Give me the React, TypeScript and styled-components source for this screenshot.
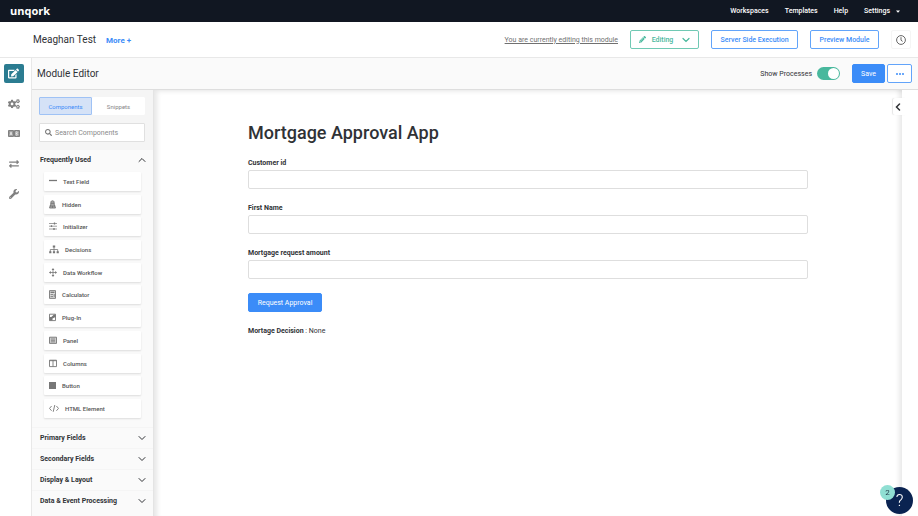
import React, { ReactNode, useState } from "react";
import styled, { createGlobalStyle } from "styled-components";
import { FaCogs, FaEdit, FaExchangeAlt, FaPencilAlt, FaSearch, FaWrench } from "react-icons/fa";

const color = {
  navy: "#111722",
  blue: "#3b8cf8",
  blueLine: "#62a4fa",
  teal: "#2b7c91",
  green: "#48b89d",
  greenLine: "#70c9b4",
  ink: "#303236",
  line: "#e8e8e8",
};

const GlobalStyle = createGlobalStyle`
  *, *::before, *::after { box-sizing: border-box; }
  body { margin: 0; background: #fff; }
  body, button, input { font-family: Roboto, "Liberation Sans", sans-serif; color: ${color.ink}; }
  button { cursor: pointer; margin: 0; }
  svg { display: block; flex: none; }
`;

const Page = styled.div`
  display: flex;
  flex-direction: column;
  height: 100vh;
  overflow: hidden;
`;

const TopBar = styled.nav`
  flex: none;
  display: flex;
  align-items: center;
  justify-content: space-between;
  height: 22px;
  padding: 0 18px 0 10px;
  background: ${color.navy};
`;

const Logo = styled.a`
  font: 700 11px/16px "Open Sans", sans-serif;
  color: #fff;
  text-decoration: none;
`;

const TopLinks = styled.div`
  display: flex;
  gap: 16px;
`;

const TopLink = styled.a`
  display: flex;
  align-items: center;
  gap: 6px;
  font-size: 7px;
  font-weight: 500;
  color: #fff;
  text-decoration: none;
`;

const Header = styled.header`
  flex: none;
  display: flex;
  align-items: center;
  height: 36px;
  padding: 0 7px 0 33px;
  border-bottom: 1px solid ${color.line};
`;

const ModuleName = styled.span`
  font-size: 10px;
`;

const More = styled.button`
  margin-left: 10px;
  padding: 2px 0 0;
  border: 0;
  background: none;
  font-size: 8px;
  font-weight: 700;
  color: ${color.blue};
`;

const EditNotice = styled.a`
  margin-left: auto;
  margin-right: 12px;
  font-size: 7px;
  color: #707070;
`;

const Button = styled.button<{ $tone?: string; $line?: string; $solid?: boolean; $width: number }>`
  display: flex;
  align-items: center;
  justify-content: center;
  width: ${(p) => p.$width}px;
  height: 19px;
  padding: 0;
  border: 1px solid ${(p) => p.$line ?? (p.$solid ? color.blue : color.blueLine)};
  border-radius: 2px;
  background: ${(p) => (p.$solid ? color.blue : "#fff")};
  font-size: 7px;
  font-weight: ${(p) => (p.$solid ? 400 : 500)};
  white-space: nowrap;
  color: ${(p) => (p.$solid ? "#fff" : p.$tone ?? color.blue)};
`;

const HeaderActions = styled.div`
  display: flex;
  gap: 12px;
`;

const EditingContent = styled.span`
  display: flex;
  align-items: center;
  gap: 6px;
  svg:last-child { margin-left: 3px; }
`;

const HistoryButton = styled.button`
  display: flex;
  align-items: center;
  justify-content: center;
  width: 20px;
  height: 19px;
  padding: 0;
  border: 1px solid #f5f5f5;
  border-radius: 2px;
  background: #fff;
`;

const Body = styled.div`
  flex: 1;
  display: flex;
  min-height: 0;
`;

const Rail = styled.nav`
  flex: none;
  display: flex;
  flex-direction: column;
  align-items: center;
  gap: 11px;
  width: 32px;
  padding: 6px 4px 0 0;
  border-right: 1px solid ${color.line};
`;

const RailButton = styled.button<{ $active?: boolean }>`
  display: flex;
  align-items: center;
  justify-content: center;
  width: 20px;
  height: 19px;
  padding: 0;
  border: 0;
  border-radius: 2px;
  background: ${(p) => (p.$active ? color.teal : "none")};
  color: ${(p) => (p.$active ? "#fff" : "#808080")};
`;

const Editor = styled.div`
  flex: 1;
  display: flex;
  flex-direction: column;
  min-width: 0;
`;

const Toolbar = styled.div`
  flex: none;
  display: flex;
  align-items: center;
  height: 32px;
  padding: 0 6px 0 5px;
  border-bottom: 1px solid #dedede;
  background: #fafafa;
`;

const ToolbarTitle = styled.h1`
  margin: 0 auto 0 0;
  font-size: 10px;
  font-weight: 400;
`;

const ToggleLabel = styled.label`
  display: flex;
  align-items: center;
  gap: 5px;
  margin-right: 12px;
  font-size: 7px;
`;

const Toggle = styled.input`
  appearance: none;
  display: flex;
  align-items: center;
  width: 23px;
  height: 13px;
  margin: 0;
  padding: 1px;
  border-radius: 7px;
  background: #bbb;
  cursor: pointer;
  &::before {
    content: "";
    width: 11px;
    height: 11px;
    border-radius: 50%;
    background: #fff;
  }
  &:checked { background: ${color.green}; justify-content: flex-end; }
`;

const ButtonPair = styled.div`
  display: flex;
  gap: 2px;
`;

const Workspace = styled.div`
  flex: 1;
  display: flex;
  min-height: 0;
`;

const Palette = styled.aside`
  flex: none;
  width: 122px;
  background: #fafafa;
  border-right: 1px solid #e4e4e4;
  overflow: hidden;
`;

const PaletteTop = styled.div`
  display: flex;
  flex-direction: column;
  gap: 8px;
  padding: 7px 8px 7px 7px;
  background: #f5f5f5;
`;

const TabList = styled.div`
  display: grid;
  grid-template-columns: 1fr 1fr;
`;

const Tab = styled.button<{ $active: boolean }>`
  height: 18px;
  padding: 0;
  border: 1px solid ${(p) => (p.$active ? "#9fc2f5" : "#fff")};
  border-radius: 1px;
  background: ${(p) => (p.$active ? "#d5e2f7" : "#fff")};
  font-size: 6px;
  color: ${(p) => (p.$active ? color.blue : "#888")};
`;

const SearchBox = styled.label`
  display: flex;
  align-items: center;
  gap: 3px;
  height: 19px;
  padding: 0 5px;
  border: 1px solid #e0e0e0;
  border-radius: 1px;
  background: #fff;
  color: #777;
`;

const SearchInput = styled.input`
  flex: 1;
  min-width: 0;
  padding: 0;
  border: 0;
  outline: 0;
  background: none;
  font-size: 7px;
  &::placeholder { color: #8b8b8b; opacity: 1; }
`;

const SectionButton = styled.button`
  display: flex;
  align-items: center;
  justify-content: space-between;
  width: 100%;
  height: 21px;
  padding: 0 7px 0 8px;
  border: 0;
  border-top: 1px solid #f5f5f5;
  background: none;
  font-size: 7px;
  font-weight: 700;
`;

const ComponentList = styled.ul`
  display: flex;
  flex-direction: column;
  justify-content: space-between;
  height: 246px;
  margin: 2px 12px 9px;
  padding: 0;
  list-style: none;
`;

const ComponentItem = styled.button`
  display: flex;
  align-items: center;
  gap: 6px;
  width: 100%;
  height: 19px;
  padding: 0 5px;
  border: 0;
  border-radius: 1px;
  background: #fff;
  box-shadow: 0 1px 2px rgba(0, 0, 0, 0.12);
  font-size: 6px;
  font-weight: 500;
  color: #555;
`;

const Canvas = styled.main`
  flex: 1;
  min-width: 0;
  padding: 30px 94px 0;
  background: #fff;
  box-shadow: inset 5px 3px 5px -2px rgba(0, 0, 0, 0.1), inset -6px 0 5px -3px rgba(0, 0, 0, 0.09);
`;

const FormTitle = styled.h2`
  margin: 0 0 12px;
  font-size: 18px;
  line-height: 26px;
  font-weight: 500;
`;

const Field = styled.label`
  display: flex;
  flex-direction: column;
  gap: 2px;
  margin-bottom: 14px;
  font-size: 7px;
  line-height: 10px;
  font-weight: 700;
`;

const FieldInput = styled.input`
  width: 100%;
  height: 19px;
  padding: 0 5px;
  border: 1px solid #dedede;
  border-radius: 2px;
  background: #fff;
  font-size: 7px;
`;

const Decision = styled.p`
  margin: 14px 0 0;
  font-size: 7px;
  line-height: 10px;
`;

const RightEdge = styled.aside`
  position: relative;
  flex: none;
  width: 16px;
  background: #fff;
`;

const Expand = styled.button`
  position: absolute;
  top: 8px;
  right: 12px;
  display: flex;
  align-items: center;
  justify-content: center;
  width: 13px;
  height: 17px;
  padding: 0 3px 0 0;
  border: 0;
  border-radius: 2px 0 0 2px;
  background: #fff;
  box-shadow: -1px 0 1px rgba(0, 0, 0, 0.1);
`;

const HelpButton = styled.button`
  position: fixed;
  right: 5px;
  bottom: 2px;
  width: 27px;
  height: 27px;
  padding: 0;
  border: 0;
  border-radius: 50%;
  background: #0a2351;
  font-size: 17px;
  line-height: 27px;
  font-weight: 300;
  color: #fff;
`;

const HelpBadge = styled.span`
  position: absolute;
  top: -2px;
  left: -6px;
  width: 15px;
  height: 15px;
  border-radius: 50%;
  background: #90dfd3;
  font-size: 8px;
  line-height: 15px;
  font-weight: 400;
  color: #24414d;
`;

const Chevron = ({ d = "M1 2.5 4 5.5 7 2.5", size = 8, weight = 1 }: { d?: string; size?: number; weight?: number }) => (
  <svg width={size} height={size} viewBox="0 0 8 8" fill="none" stroke="currentColor" strokeWidth={weight} strokeLinecap="round">
    <path d={d} />
  </svg>
);

const Glyph = ({ w, children }: { w: number; children: ReactNode }) => (
  <svg width={w} height="9" viewBox={`0 0 ${w} 9`} fill="none" stroke="#777" strokeWidth="0.9">
    {children}
  </svg>
);

const components: { name: string; icon: ReactNode }[] = [
  { name: "Text Field", icon: <Glyph w={8}><path d="M0 3.5H8" strokeWidth="1.3" /></Glyph> },
  {
    name: "Hidden",
    icon: (
      <Glyph w={7}>
        <path d="M1.7 5 2 1.7Q2.2.8 3.5.8T5 1.7L5.3 5 6.5 8H.5Z" fill="#aaa" />
        <path d="M1.7 3.3H5.3M.5 6H6.5M3.5 6V8" />
      </Glyph>
    ),
  },
  {
    name: "Initializer",
    icon: (
      <Glyph w={8}>
        <path d="M0 1.5H8M0 4.2H8M0 7H8" strokeWidth="0.7" />
        <path d="M5.5.6V2.4M2.5 3.3V5.1M5 6.1V7.9" strokeWidth="1.3" />
      </Glyph>
    ),
  },
  {
    name: "Decisions",
    icon: (
      <Glyph w={10}>
        <path d="M5 2V7M1.3 7V4.5H8.7V7" strokeWidth="0.8" />
        <path d="M3.8.5H6.2V2.5H3.8ZM.2 6.3H2.4V8.3H.2ZM3.9 6.3H6.1V8.3H3.9ZM7.6 6.3H9.8V8.3H7.6Z" fill="#777" stroke="none" />
      </Glyph>
    ),
  },
  {
    name: "Data Workflow",
    icon: (
      <Glyph w={8}>
        <path d="M4 1V8M.8 4.5H7.2" strokeWidth="0.8" />
        <path d="M4 0 5.4 2H2.6ZM4 9 5.4 7H2.6ZM0 4.5 1.8 3.1V5.9ZM8 4.5 6.2 3.1V5.9Z" fill="#777" stroke="none" />
      </Glyph>
    ),
  },
  {
    name: "Calculator",
    icon: (
      <Glyph w={7}>
        <path d="M.5.6H6.5V8.4H.5Z" fill="#ddd" />
        <path d="M1.5 2.3H5.5" strokeWidth="1.3" />
        <path d="M1.5 4.6H4M1.5 6.6H4M5.2 4V7.2" />
      </Glyph>
    ),
  },
  {
    name: "Plug-In",
    icon: (
      <Glyph w={7}>
        <path d="M.5 1.2H6.5V7.6H.5Z" />
        <path d="M.5 7.6V4H2.3L5 1.4H6.5V4L3.5 5.4V7.6Z" fill="#777" stroke="none" />
      </Glyph>
    ),
  },
  {
    name: "Panel",
    icon: (
      <Glyph w={8}>
        <path d="M.5 1.2H7.5V7.4H.5Z" fill="#ccc" />
        <path d="M2 3H6M2 4.4H6M2 5.8H6" strokeWidth="0.7" />
      </Glyph>
    ),
  },
  { name: "Columns", icon: <Glyph w={8}><path d="M.5 1.2H7.5V7.6H.5ZM4 1.2V7.6" /><path d="M.5 1.7H7.5" /></Glyph> },
  { name: "Button", icon: <Glyph w={7}><path d="M0 1H7V8H0Z" fill="#777" stroke="none" /></Glyph> },
  { name: "HTML Element", icon: <Glyph w={10}><path d="M2.6 2 .5 4.4 2.6 6.8M7.4 2 9.5 4.4 7.4 6.8M5.8 1 4.2 7.8" /></Glyph> },
];

const sections = ["Primary Fields", "Secondary Fields", "Display & Layout", "Data & Event Processing"];
const fields = ["Customer id", "First Name", "Mortgage request amount"];

export default function App() {
  const [tab, setTab] = useState("Components");
  return (
    <Page>
      <GlobalStyle />
      <TopBar>
        <Logo href="#">unqork</Logo>
        <TopLinks>
          <TopLink href="#">Workspaces</TopLink>
          <TopLink href="#">Templates</TopLink>
          <TopLink href="#">Help</TopLink>
          <TopLink href="#">
            Settings
            <svg width="4" height="3" viewBox="0 0 4 3"><path d="M0 .5H4L2 2.7Z" fill="#fff" /></svg>
          </TopLink>
        </TopLinks>
      </TopBar>
      <Header>
        <ModuleName>Meaghan Test</ModuleName>
        <More>More +</More>
        <EditNotice href="#">You are currently editing this module</EditNotice>
        <HeaderActions>
          <Button $width={69} $tone={color.green} $line={color.greenLine}>
            <EditingContent>
              <FaPencilAlt size={7} />
              Editing
              <Chevron weight={1.2} />
            </EditingContent>
          </Button>
          <Button $width={87}>Server Side Execution</Button>
          <Button $width={69}>Preview Module</Button>
          <HistoryButton aria-label="History">
            <svg width="10" height="10" viewBox="0 0 10 10" fill="none" stroke="#666" strokeWidth="1">
              <circle cx="5" cy="5" r="4.4" />
              <path d="M5 2.2V5.2L6.6 6.4" />
            </svg>
          </HistoryButton>
        </HeaderActions>
      </Header>
      <Body>
        <Rail>
          <RailButton $active aria-label="Module editor"><FaEdit size={11} /></RailButton>
          <RailButton aria-label="Configuration"><FaCogs size={12} /></RailButton>
          <RailButton aria-label="Reference data">
            <svg width="12" height="7" viewBox="0 0 12 7" fill="none" stroke="currentColor" strokeWidth="1">
              <path d="M.5.5H5.5V6.5H.5ZM6.5.5H11.5V6.5H6.5Z" fill="#999" />
              <path d="M2 5.2 3 1.8 4 5.2M2.3 4.2H3.7M8 1.8V5.2H9L10 4.4 9.2 3.5 10 2.6 9 1.8ZM8 3.5H9" stroke="#fff" strokeWidth="0.6" />
            </svg>
          </RailButton>
          <RailButton aria-label="Services"><FaExchangeAlt size={10} /></RailButton>
          <RailButton aria-label="Tools"><FaWrench size={10} /></RailButton>
        </Rail>
        <Editor>
          <Toolbar>
            <ToolbarTitle>Module Editor</ToolbarTitle>
            <ToggleLabel>
              Show Processes
              <Toggle type="checkbox" role="switch" defaultChecked />
            </ToggleLabel>
            <ButtonPair>
              <Button $width={33} $solid>Save</Button>
              <Button $width={25} aria-label="More actions">
                <svg width="8" height="2" viewBox="0 0 8 2" fill="currentColor">
                  <circle cx="1" cy="1" r="1" /><circle cx="4" cy="1" r="1" /><circle cx="7" cy="1" r="1" />
                </svg>
              </Button>
            </ButtonPair>
          </Toolbar>
          <Workspace>
            <Palette>
              <PaletteTop>
                <TabList role="tablist">
                  {["Components", "Snippets"].map((name) => (
                    <Tab key={name} role="tab" aria-selected={tab === name} $active={tab === name} onClick={() => setTab(name)}>
                      {name}
                    </Tab>
                  ))}
                </TabList>
                <SearchBox>
                  <FaSearch size={7} />
                  <SearchInput type="text" aria-label="Search Components" placeholder="Search Components" />
                </SearchBox>
              </PaletteTop>
              <SectionButton aria-expanded="true">
                Frequently Used
                <Chevron d="M1 5.5 4 2.5 7 5.5" />
              </SectionButton>
              <ComponentList>
                {components.map(({ name, icon }) => (
                  <li key={name}><ComponentItem>{icon}{name}</ComponentItem></li>
                ))}
              </ComponentList>
              {sections.map((name) => (
                <SectionButton key={name} aria-expanded="false">{name}<Chevron /></SectionButton>
              ))}
            </Palette>
            <Canvas>
              <FormTitle>Mortgage Approval App</FormTitle>
              {fields.map((name) => (
                <Field key={name}>{name}<FieldInput type="text" /></Field>
              ))}
              <Button $width={74} $solid>Request Approval</Button>
              <Decision><b>Mortage Decision</b> : None</Decision>
            </Canvas>
            <RightEdge>
              <Expand aria-label="Expand panel"><Chevron d="M5.5 1 2.5 4 5.5 7" weight={1.5} /></Expand>
            </RightEdge>
          </Workspace>
        </Editor>
      </Body>
      <HelpButton aria-label="Help, 2 notifications">?<HelpBadge>2</HelpBadge></HelpButton>
    </Page>
  );
}
